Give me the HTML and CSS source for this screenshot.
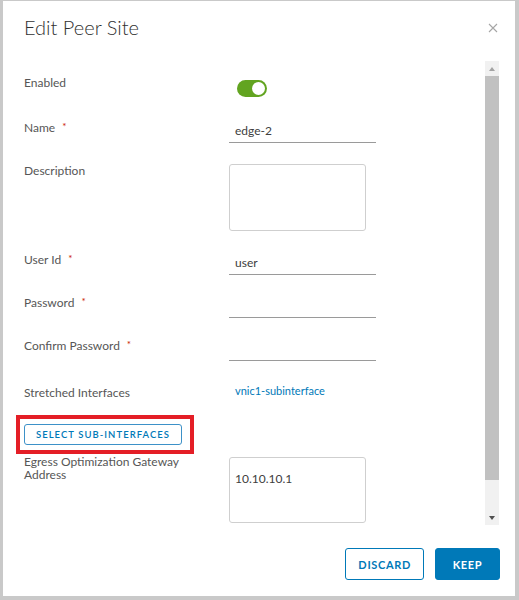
FILE: index.html
```html
<!DOCTYPE html>
<html lang="en">
<head>
<meta charset="utf-8">
<title>Edit Peer Site</title>
<link rel="stylesheet" href="styles.css">
</head>
<body>
<div class="modal">
  <header class="modal-header">
    <h3 class="modal-title">Edit Peer Site</h3>
    <button class="close" type="button" aria-label="Close">
      <svg width="10" height="10" viewBox="0 0 10 10"><path d="M1 1L9 9M9 1L1 9" stroke="#a6a6a6" stroke-width="1.1" fill="none"/></svg>
    </button>
  </header>
  <div class="modal-body">
    <form class="form">
      <div class="row row-enabled">
        <label class="label lbl-enabled">Enabled</label>
        <div class="control"><span class="toggle"><span class="knob"></span></span></div>
      </div>
      <div class="row row-name">
        <label class="label lbl-up">Name<span class="req">*</span></label>
        <div class="control"><input class="input" type="text" value="edge-2"></div>
      </div>
      <div class="row row-desc">
        <label class="label lbl-up">Description</label>
        <div class="control"><textarea class="textarea ta-desc"></textarea></div>
      </div>
      <div class="row row-user">
        <label class="label lbl-up">User Id<span class="req">*</span></label>
        <div class="control"><input class="input" type="text" value="user"></div>
      </div>
      <div class="row row-pwd">
        <label class="label lbl-up">Password<span class="req">*</span></label>
        <div class="control"><input class="input" type="password" value=""></div>
      </div>
      <div class="row row-confirm">
        <label class="label lbl-up">Confirm Password<span class="req">*</span></label>
        <div class="control"><input class="input" type="password" value=""></div>
      </div>
      <div class="row row-stretched">
        <label class="label lbl-2">Stretched Interfaces</label>
        <div class="control"><a class="link">vnic1-subinterface</a></div>
      </div>
      <div class="row-btn">
        <span class="highlight-wrap">
          <button class="btn-sm" type="button">SELECT SUB-INTERFACES</button>
          <span class="highlight"></span>
        </span>
      </div>
      <div class="row row-egress">
        <label class="label multi">Egress Optimization Gateway Address</label>
        <div class="control"><textarea class="textarea ta-egress">10.10.10.1</textarea></div>
      </div>
    </form>
    <div class="scrollbar">
      <div class="sb-btn"><span class="arrow-up"></span></div>
      <div class="sb-thumb"></div>
      <div class="sb-rest"></div>
      <div class="sb-btn"><span class="arrow-down"></span></div>
    </div>
  </div>
  <footer class="modal-footer">
    <button class="btn btn-outline" type="button">DISCARD</button>
    <button class="btn btn-primary" type="button">KEEP</button>
  </footer>
</div>
</body>
</html>
```

FILE: styles.css
```css
* { box-sizing: border-box; }

html, body {
  margin: 0;
  height: 600px;
}

body {
  background: #c9c9c9;
  padding: 1px 4px 4px 3px;
  font-family: Lato, "Liberation Sans", sans-serif;
  overflow: hidden;
}

.modal {
  width: 512px;
  height: 595px;
  background: #ffffff;
  display: flex;
  flex-direction: column;
}

.modal-header {
  height: 60px;
  display: flex;
  align-items: flex-start;
  justify-content: space-between;
  padding: 14px 17px 0 21px;
}

.modal-title {
  margin: 0;
  font-size: 20px;
  line-height: 24px;
  font-weight: 300;
  color: #313131;
}

.close {
  margin-top: 8px;
  width: 10px;
  height: 10px;
  padding: 0;
  border: 0;
  background: none;
  display: flex;
}

.modal-body {
  height: 464px;
  display: flex;
  overflow: hidden;
}

.form {
  flex: 1;
  margin: 0;
  padding: 13px 0 0 21px;
  display: flex;
  flex-direction: column;
}

.row {
  display: grid;
  grid-template-columns: 205px 1fr;
  align-items: start;
}

.row-name { margin-top: 22px; }
.row-desc { margin-top: 21px; }
.row-user { margin-top: 20px; }
.row-pwd { margin-top: 19px; }
.row-confirm { margin-top: 19px; }
.row-stretched { margin-top: 22px; }
.row-btn { margin-top: 23px; display: flex; }
.row-egress { margin-top: 11px; }

.label {
  font-size: 12px;
  line-height: 16px;
  color: #565656;
}

.lbl-enabled { margin-top: 1px; }
.lbl-up { margin-top: -1px; }
.lbl-2 { margin-top: 2px; }

.label.multi {
  line-height: 13px;
  padding-right: 30px;
  margin-top: -1px;
}

.req {
  color: #c92100;
  font-size: 10px;
  margin-left: 7px;
  vertical-align: 2px;
}

.control {
  display: flex;
}

.toggle {
  margin: 6px 0 0 8px;
  width: 30px;
  height: 17px;
  border-radius: 9px;
  background: #62a420;
  display: flex;
  justify-content: flex-end;
  padding: 2px;
}

.knob {
  width: 13px;
  height: 13px;
  border-radius: 50%;
  background: #ffffff;
}

.input {
  width: 147px;
  height: 24px;
  border: 0;
  border-bottom: 1px solid #9a9a9a;
  padding: 0 6px;
  font-family: Lato, "Liberation Sans", sans-serif;
  font-size: 12px;
  color: #404040;
  background: transparent;
  outline: none;
}

.textarea {
  width: 137px;
  border: 1px solid #cfcfcf;
  border-radius: 3px;
  padding: 13px 5px 0 5px;
  font-family: Lato, "Liberation Sans", sans-serif;
  font-size: 12px;
  line-height: 16px;
  color: #404040;
  resize: none;
  outline: none;
}

.ta-desc { height: 67px; }
.ta-egress { height: 66px; margin-top: 1px; }

.link {
  margin-left: 6px;
  font-size: 11px;
  line-height: 16px;
  color: #0079b8;
}

.highlight-wrap {
  position: relative;
  display: flex;
}

.btn-sm {
  width: 158px;
  height: 21px;
  padding: 0;
  border: 1px solid #3d91c8;
  border-radius: 3px;
  background: #ffffff;
  color: #0079b8;
  font-family: Lato, "Liberation Sans", sans-serif;
  font-size: 9.5px;
  font-weight: 600;
  letter-spacing: 0.11em;
}

.highlight {
  position: absolute;
  top: -9px;
  left: -8px;
  right: -12px;
  bottom: -9px;
  border: 4px solid #e41e26;
}

.scrollbar {
  width: 14px;
  margin-right: 16px;
  background: #f1f1f1;
  display: flex;
  flex-direction: column;
}

.sb-btn {
  height: 15px;
  display: flex;
  align-items: center;
  justify-content: center;
}

.sb-thumb {
  height: 404px;
  background: #c1c1c1;
}

.sb-rest { flex: 1; }

.arrow-up {
  width: 0;
  height: 0;
  border-left: 3.5px solid transparent;
  border-right: 3.5px solid transparent;
  border-bottom: 4px solid #a3a3a3;
}

.arrow-down {
  width: 0;
  height: 0;
  border-left: 3.5px solid transparent;
  border-right: 3.5px solid transparent;
  border-top: 4px solid #505050;
}

.modal-footer {
  flex: 1;
  display: flex;
  justify-content: flex-end;
  align-items: flex-start;
  gap: 11px;
  padding: 23px 15px 0 0;
}

.btn {
  height: 32px;
  min-width: 65px;
  padding: 0 12px;
  border-radius: 3px;
  font-family: Lato, "Liberation Sans", sans-serif;
  font-size: 11px;
  font-weight: 700;
  letter-spacing: 0.06em;
}

.btn-outline {
  border: 1px solid #0079b8;
  background: #ffffff;
  color: #0079b8;
}

.btn-primary {
  border: 1px solid #0079b8;
  background: #0079b8;
  color: #ffffff;
}
```
